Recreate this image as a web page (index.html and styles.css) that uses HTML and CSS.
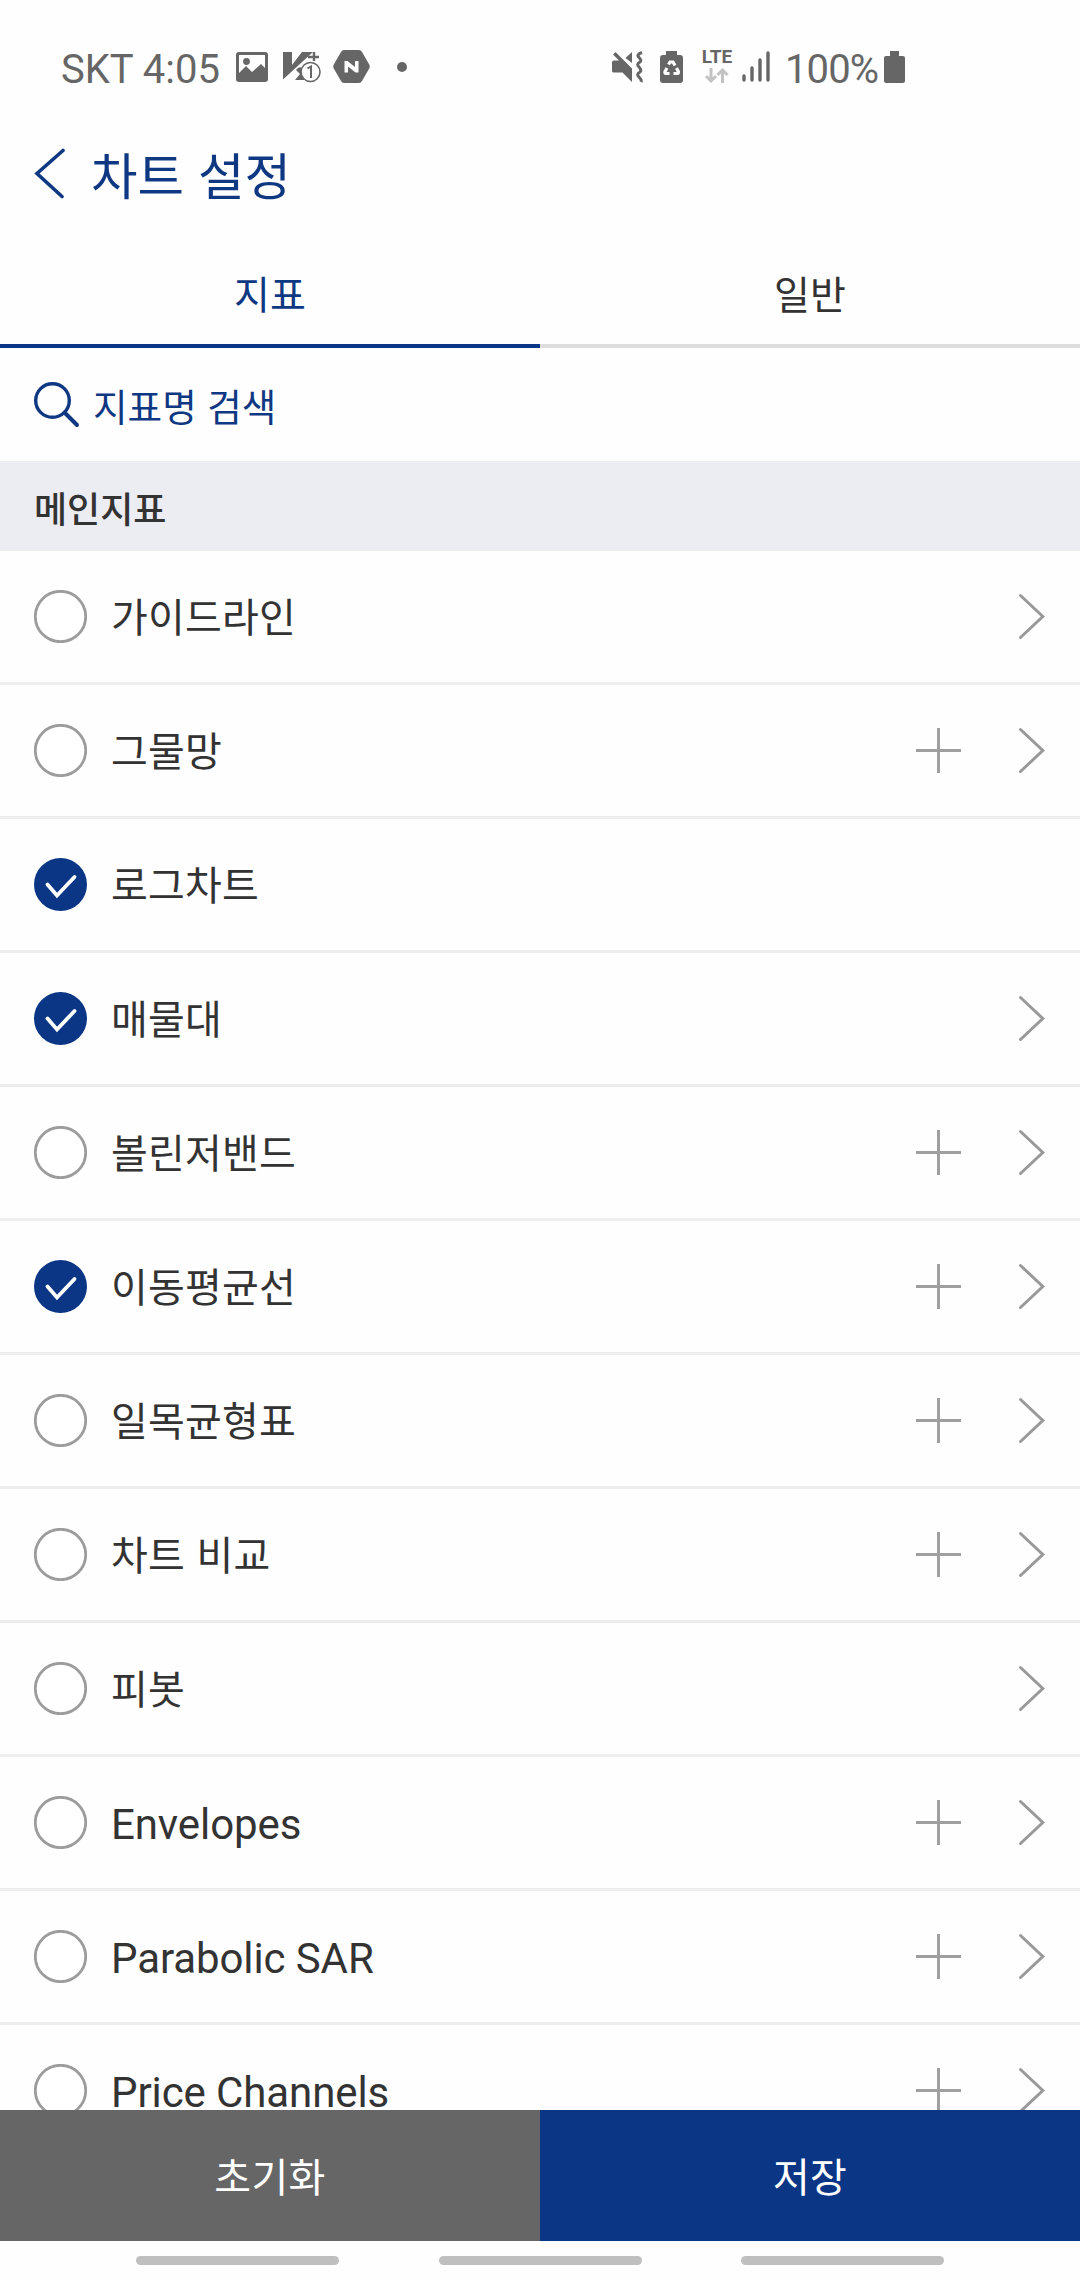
FILE: index.html
```html
<!DOCTYPE html>
<html lang="ko">
<head>
<meta charset="utf-8">
<title>차트 설정</title>
<link rel="stylesheet" href="styles.css">
</head>
<body>
<svg class="defs" aria-hidden="true">
  <symbol id="chevron" viewBox="0 0 27 47"><path d="M2.5 2.5 24.8 23.5 2.5 44.5" fill="none" stroke="#999" stroke-width="3" stroke-linecap="round"/></symbol>
  <symbol id="plus" viewBox="0 0 45 45"><path d="M0 22.5H45M22.5 0V45" fill="none" stroke="#9f9f9f" stroke-width="3"/></symbol>
  <symbol id="off" viewBox="0 0 53 53"><circle cx="26.5" cy="26.5" r="25.2" fill="#fff" stroke="#9c9c9c" stroke-width="2.8"/></symbol>
  <symbol id="on" viewBox="0 0 53 53"><circle cx="26.5" cy="26.5" r="26.5" fill="#0a3685"/><path d="M13.5 26.5 23 37.5 40.5 19" fill="none" stroke="#fff" stroke-width="3.8" stroke-linecap="round"/></symbol>
</svg>
<div class="screen">
  <header class="status">
    <div class="status-left">
      <span class="carrier">SKT 4:05</span>
      <svg class="ico-image" width="32" height="30" viewBox="0 0 32 30"><path fill="#666" fill-rule="evenodd" d="M3 0H29Q32 0 32 3V27Q32 30 29 30H3Q0 30 0 27V3Q0 0 3 0ZM3 3V21L10 14 16 20 25 12 29 16V3Z"/><circle cx="10.5" cy="9.500" r="3.400" fill="#666"/></svg>
      <svg class="ico-v3" width="38" height="32" viewBox="0 0 38 32"><path d="M0 1H9V14L19 1H30L0 28.500Z" fill="#666"/><path d="M31 1V10M25 6H36" stroke="#666" stroke-width="2.400" fill="none"/><path d="M13 19Q16 15 19 17V24L22 29H12L17 23Z" fill="#666"/><circle cx="27.500" cy="21" r="9.500" fill="#fff" stroke="#666" stroke-width="1.600"/><path d="M24.500 17.500 28 15.500V27" stroke="#666" stroke-width="2" fill="none"/></svg>
      <svg class="ico-n" width="37" height="33" viewBox="0 0 37 33"><path d="M11 0H26Q28 0 29 2L36.500 15Q37 16.500 36.500 18L29 31Q28 33 26 33H11Q9 33 8 31L.5 18Q0 16.500 .5 15L8 2Q9 0 11 0Z" fill="#666"/><path d="M11.500 22.500V11H14.500L22 17V11H25.500V22.500H22.500L15 16.500V22.500Z" fill="#fff"/></svg>
      <span class="dot"></span>
    </div>
    <div class="status-right">
      <svg class="ico-mute" width="32" height="32" viewBox="0 0 32 32"><path d="M0 11Q0 9.500 2 9.500H7L1 3.500 3.500 1 20 17.500V31L10.500 21.500H2Q0 21.500 0 20ZM20 1V12L13.500 7Z" fill="#666"/><path d="M30 1.500Q24 3.500 27 6.500T28 11Q24 13 27 16T28 21Q24 23 27 26T29 31" fill="none" stroke="#666" stroke-width="3"/></svg>
      <svg class="ico-saver" width="23" height="32" viewBox="0 0 23 32"><path d="M6 0H17V4H20Q23 4 23 7V29Q23 32 20 32H3Q0 32 0 29V7Q0 4 3 4H6Z" fill="#666"/><path d="M8.500 13.500 10 11H13L15 14.500M16.500 17 18.500 21Q18.500 22.500 17 22.500H13.500M9.500 22.500H6Q4.500 22.500 5 20.500L7 17" fill="none" stroke="#fff" stroke-width="3.200"/></svg>
      <div class="network">
        <span class="lte">LTE</span>
        <svg width="24" height="15" viewBox="0 0 24 15"><path d="M6 0V13M1 8 6 13 11 8M17.500 15V2M12.500 7 17.500 2 22.500 7" fill="none" stroke="#c3c3c3" stroke-width="3"/></svg>
      </div>
      <svg class="ico-signal" width="28" height="31" viewBox="0 0 28 31"><path d="M2 25V29M10 17V29M18 9V29M26 2V29" stroke="#666" stroke-width="3.400" stroke-linecap="round"/></svg>
      <span class="percent">100%</span>
      <svg class="ico-battery" width="21" height="32" viewBox="0 0 21 32"><path d="M6 0H15V5H19Q21 5 21 7V30Q21 32 19 32H2Q0 32 0 30V7Q0 5 2 5H6Z" fill="#666"/></svg>
    </div>
  </header>

  <div class="titlebar">
    <svg width="32" height="51" viewBox="0 0 32 51"><path d="M29 2.500 3 25.500 28 48.500" fill="none" stroke="#0f3883" stroke-width="3.600" stroke-linecap="round"/></svg>
    <h1>차트 설정</h1>
  </div>

  <nav class="tabs">
    <div class="tab active">지표</div>
    <div class="tab">일반</div>
  </nav>

  <div class="search">
    <svg width="46" height="46" viewBox="0 0 46 46"><circle cx="18.500" cy="18.500" r="16.800" fill="none" stroke="#0f3883" stroke-width="3.400"/><path d="M30.500 30.500 43 43" stroke="#0f3883" stroke-width="4" stroke-linecap="round"/></svg>
    <span>지표명 검색</span>
  </div>

  <h2 class="section">메인지표</h2>

  <ul class="list">
    <li class="row"><svg class="check"><use href="#off"/></svg><span class="name">가이드라인</span><svg class="chevron"><use href="#chevron"/></svg></li>
    <li class="row"><svg class="check"><use href="#off"/></svg><span class="name">그물망</span><svg class="plus"><use href="#plus"/></svg><svg class="chevron"><use href="#chevron"/></svg></li>
    <li class="row"><svg class="check"><use href="#on"/></svg><span class="name">로그차트</span></li>
    <li class="row"><svg class="check"><use href="#on"/></svg><span class="name">매물대</span><svg class="chevron"><use href="#chevron"/></svg></li>
    <li class="row"><svg class="check"><use href="#off"/></svg><span class="name">볼린저밴드</span><svg class="plus"><use href="#plus"/></svg><svg class="chevron"><use href="#chevron"/></svg></li>
    <li class="row"><svg class="check"><use href="#on"/></svg><span class="name">이동평균선</span><svg class="plus"><use href="#plus"/></svg><svg class="chevron"><use href="#chevron"/></svg></li>
    <li class="row"><svg class="check"><use href="#off"/></svg><span class="name">일목균형표</span><svg class="plus"><use href="#plus"/></svg><svg class="chevron"><use href="#chevron"/></svg></li>
    <li class="row"><svg class="check"><use href="#off"/></svg><span class="name">차트 비교</span><svg class="plus"><use href="#plus"/></svg><svg class="chevron"><use href="#chevron"/></svg></li>
    <li class="row"><svg class="check"><use href="#off"/></svg><span class="name">피봇</span><svg class="chevron"><use href="#chevron"/></svg></li>
    <li class="row"><svg class="check"><use href="#off"/></svg><span class="name latin">Envelopes</span><svg class="plus"><use href="#plus"/></svg><svg class="chevron"><use href="#chevron"/></svg></li>
    <li class="row"><svg class="check"><use href="#off"/></svg><span class="name latin">Parabolic SAR</span><svg class="plus"><use href="#plus"/></svg><svg class="chevron"><use href="#chevron"/></svg></li>
    <li class="row"><svg class="check"><use href="#off"/></svg><span class="name latin">Price Channels</span><svg class="plus"><use href="#plus"/></svg><svg class="chevron"><use href="#chevron"/></svg></li>
  </ul>

  <footer class="actions">
    <button class="reset">초기화</button>
    <button class="save">저장</button>
  </footer>
  <div class="gestures"><i></i><i></i><i></i></div>
</div>
</body>
</html>
```
FILE: styles.css
```css
* { box-sizing: border-box; }
body { margin: 0; background: #fff; }
svg { display: block; flex: none; }
.defs { display: none; }
.screen {
  width: 1080px; height: 2280px; overflow: hidden;
  display: flex; flex-direction: column;
  background: #fefefe; color: #333;
  font-family: "Noto Sans CJK KR", sans-serif;
}
.screen > * { flex: none; }

.status {
  height: 136px; padding: 0 175px 3px 61px;
  display: flex; justify-content: space-between; align-items: center;
  font-family: Roboto, sans-serif; font-size: 40px; color: #666;
}
.status-left, .status-right { display: flex; align-items: center; white-space: nowrap; }
.carrier { width: 175px; line-height: 48px; margin-top: 6px; }
.ico-v3 { margin-left: 15px; }
.ico-n { margin-left: 12px; }
.dot { width: 10px; height: 10px; margin-left: 27px; border-radius: 50%; background: #666; }
.ico-saver { margin-left: 16px; }
.network { width: 32px; margin-left: 18px; display: flex; flex-direction: column; align-items: center; gap: 4px; }
.lte { font-size: 19px; line-height: 14px; font-weight: 700; }
.ico-signal { margin-left: 9px; }
.percent { width: 99px; margin: 6px 0 0 15px; line-height: 48px; letter-spacing: -0.9px; }

.titlebar { height: 112px; padding: 0 34px 38px; display: flex; align-items: center; gap: 25px; }
h1 { margin: 0; font-size: 50.5px; line-height: 74px; font-weight: 400; color: #0f3883; }

.tabs { height: 100px; display: grid; grid-template-columns: 1fr 1fr; }
.tab {
  display: flex; align-items: center; justify-content: center; padding-bottom: 9px;
  font-size: 39px; line-height: 60px; border-bottom: 4px solid #ddd;
}
.tab.active { color: #0f3883; border-color: #0a3685; }

.search { height: 113px; padding: 0 34px; display: flex; align-items: center; gap: 13px; font-size: 37.6px; line-height: 56px; color: #0f3883; }
.section { margin: 0; height: 90px; padding: 1px 0 0 34px; background: #ecedf3; font-size: 36px; line-height: 90px; font-weight: 500; }

.list { list-style: none; margin: 0; padding: 0; height: 1559px; overflow: hidden; }
.row { height: 134px; padding: 0 35px 0 34px; display: flex; align-items: center; border-bottom: 3px solid #ededed; }
.check { width: 53px; height: 53px; }
.name { flex: 1; margin-left: 24px; padding-bottom: 3px; font-size: 40px; line-height: 60px; letter-spacing: 0.2px; }
.latin { padding: 4px 0 0; font-family: Roboto, sans-serif; font-size: 42px; letter-spacing: -0.1px; }
.plus { width: 45px; height: 45px; margin-right: 57px; }
.chevron { width: 27px; height: 47px; }

.actions { height: 131px; display: grid; grid-template-columns: 1fr 1fr; }
.actions button { border: 0; padding: 0 0 2px; font: 400 40px/60px "Noto Sans CJK KR", sans-serif; letter-spacing: 0.3px; color: #fff; }
.reset { background: #666; }
.save { background: #0a3685; }
.gestures { height: 39px; padding: 15px 136px 0; display: flex; justify-content: space-between; }
.gestures i { width: 203px; height: 9px; border-radius: 5px; background: #bfbfbf; }
```
